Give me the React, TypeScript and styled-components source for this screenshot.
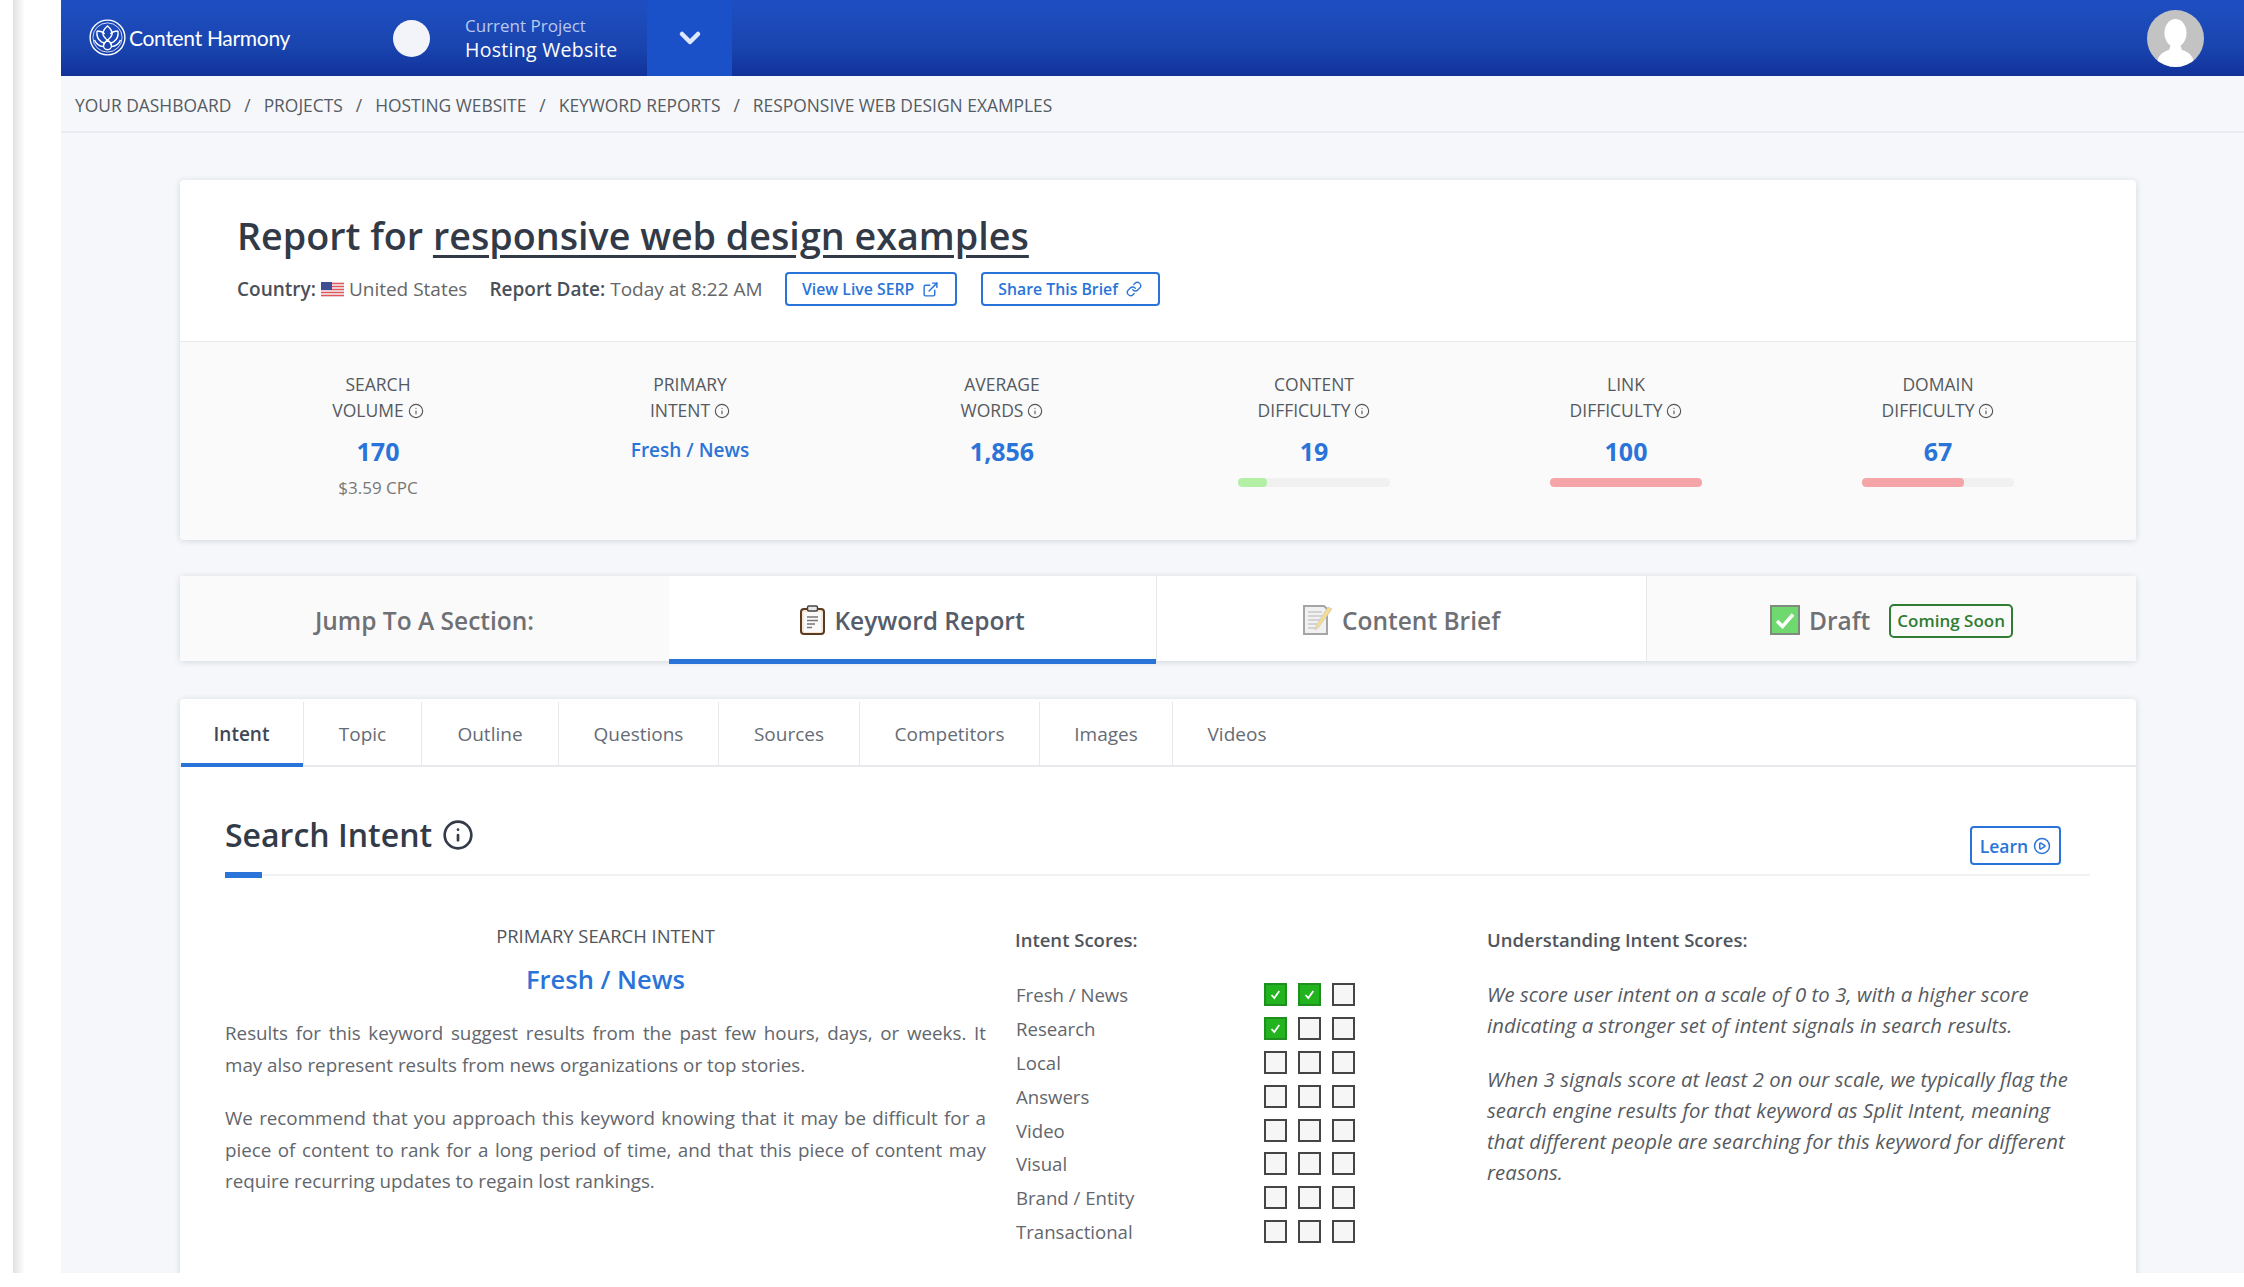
import React from 'react'
import styled, { createGlobalStyle } from 'styled-components'
import { ChevronDown, CirclePlay, ExternalLink, Info, Link } from 'lucide-react'

const GlobalStyle = createGlobalStyle`
  html, body {
    margin: 0;
    padding: 0;
    background: #fff;
  }
  body {
    font-family: 'Open Sans', 'Noto Sans', sans-serif;
    color: #5f6368;
  }
  * {
    box-sizing: border-box;
  }
`

const blue = '#2a74d9'

const Shell = styled.div`
  display: flex;
  width: 2244px;
  height: 1287px;
  overflow: hidden;
  background: #fff;
`
const Rail = styled.div`
  flex: 0 0 61px;
  height: 1273px;
  background: linear-gradient(to right, #fff 13px, #e2e2e2 13px, #fff 25px);
`
const Page = styled.div`
  flex: 1;
  height: 1273px;
  overflow: hidden;
  background: #f5f7fa;
`
const TopBar = styled.header`
  display: flex;
  align-items: center;
  height: 76px;
  padding-left: 28px;
  padding-right: 40px;
  background: linear-gradient(to bottom, #1e4fc2, #1a45b0 60%, #11329a);
  color: #fff;
`
const Brand = styled.div`
  display: flex;
  align-items: center;
  gap: 3px;
  width: 304px;
  padding-bottom: 1px;
  font-family: 'Lato', sans-serif;
  font-size: 21px;
  letter-spacing: -0.3px;
`
const ProjectDot = styled.div`
  width: 37px;
  height: 37px;
  border-radius: 50%;
  background: #f2f4fa;
`
const Project = styled.div`
  width: 182px;
  margin-left: 35px;
`
const ProjectLabel = styled.div`
  font-size: 17px;
  line-height: 24px;
  color: #b9c8ec;
`
const ProjectName = styled.div`
  font-size: 19.5px;
  line-height: 24px;
  letter-spacing: 0.3px;
`
const ProjectToggle = styled.div`
  display: flex;
  align-items: center;
  justify-content: center;
  width: 85px;
  height: 76px;
  background: #1a50c8;
`
const AvatarSlot = styled.div`
  margin-left: auto;
  width: 57px;
  height: 57px;
`
const Crumbs = styled.nav`
  display: flex;
  align-items: center;
  gap: 13px;
  height: 57px;
  padding-left: 14px;
  padding-top: 2px;
  border-bottom: 2px solid #e9ecf0;
  font-size: 17.4px;
  color: #555b63;
  text-transform: uppercase;
`
const Content = styled.main`
  padding: 47px 108px 0 119px;
`
const Card = styled.section`
  background: #fff;
  border-radius: 4px;
  box-shadow: 0 1px 6px rgba(40, 50, 70, 0.16);
`
const Overview = styled.div`
  padding: 31px 57px 35px;
  border-bottom: 1px solid #e8eaee;
`
const Title = styled.h1`
  margin: 0;
  font-size: 37.7px;
  line-height: 50px;
  font-weight: 600;
  color: #323a47;
  u {
    text-underline-offset: 5px;
  }
`
const Meta = styled.div`
  display: flex;
  align-items: center;
  margin-top: 11px;
  height: 34px;
  font-size: 19px;
  color: #666;
  b {
    font-weight: 600;
    color: #4a505a;
  }
`
const MetaItem = styled.span`
  display: flex;
  align-items: center;
  gap: 5px;
  margin-right: 22px;
`
const OutlineButton = styled.a`
  display: flex;
  align-items: center;
  justify-content: center;
  gap: 8px;
  height: 34px;
  width: ${(p) => p.$width}px;
  margin-right: 24px;
  border: 2px solid ${blue};
  border-radius: 4px;
  font-size: 15.8px;
  font-weight: 600;
  color: ${blue};
`
const LearnButton = styled(OutlineButton)`
  height: 39px;
  margin-top: 11px;
  margin-right: 29px;
  font-size: 17.5px;
  gap: 5px;
`
const Stats = styled.div`
  display: grid;
  grid-template-columns: repeat(6, 312px);
  height: 198px;
  padding: 29px 42px 0;
  background: #fafafa;
  border-radius: 0 0 4px 4px;
`
const Stat = styled.div`
  display: flex;
  flex-direction: column;
  align-items: center;
`
const StatLabel = styled.div`
  font-size: 17.5px;
  line-height: 26px;
  text-align: center;
  color: #55595f;
  text-transform: uppercase;
  svg {
    vertical-align: -2px;
    margin-left: 4px;
    color: #555;
  }
`
const StatValue = styled.div`
  margin-top: ${(p) => (p.$small ? 10 : 11)}px;
  line-height: 34px;
  font-size: ${(p) => (p.$small ? 19 : 25)}px;
  font-weight: ${(p) => (p.$small ? 600 : 700)};
  color: ${blue};
`
const StatNote = styled.div`
  margin-top: 10px;
  font-size: 17px;
  line-height: 20px;
  color: #777;
`
const Meter = styled.div`
  width: 152px;
  height: 9px;
  margin-top: 10px;
  border-radius: 4px;
  background: #f1f1f1;
  overflow: hidden;
`
const MeterFill = styled.div`
  height: 100%;
  border-radius: 4px;
  background: ${(p) => (p.$good ? '#b4efa6' : '#f5a5a8')};
`
const Jump = styled(Card)`
  display: grid;
  grid-template-columns: 489px 488px 490px 1fr;
  height: 85px;
  margin-top: 36px;
`
const JumpCell = styled.div`
  position: relative;
  display: flex;
  align-items: center;
  justify-content: center;
  gap: ${(p) => p.$gap || 9}px;
  padding-top: 3px;
  font-size: 24.5px;
  font-weight: 600;
  color: ${(p) => (p.$active ? '#555d6b' : '#6f7074')};
  background: ${(p) => (p.$plain ? '#fafafa' : '#fff')};
  border-right: ${(p) => (p.$divider ? '1px solid #e5e7ea' : 'none')};
  &::after {
    content: ${(p) => (p.$active ? "''" : 'none')};
    position: absolute;
    left: 0;
    right: 0;
    bottom: -3px;
    height: 5px;
    background: ${blue};
  }
`
const SoonTag = styled.span`
  margin-left: 10px;
  margin-top: 1px;
  padding: 3px 6px;
  border: 2px solid #2f7d32;
  border-radius: 5px;
  font-size: 17px;
  line-height: 24px;
  color: #2f7d32;
`
const Panel = styled(Card)`
  margin-top: 38px;
  height: 640px;
`
const Tabs = styled.div`
  display: flex;
  height: 68px;
  padding-top: 3px;
  border-bottom: 2px solid #e6e8ec;
`
const Tab = styled.div`
  position: relative;
  display: flex;
  align-items: center;
  justify-content: center;
  width: ${(p) => p.$width}px;
  font-size: 19px;
  font-weight: ${(p) => (p.$active ? 600 : 400)};
  color: ${(p) => (p.$active ? '#3f4756' : '#666c75')};
  border-right: ${(p) => (p.$last ? 'none' : '1px solid #e6e8ec')};
  &::after {
    content: ${(p) => (p.$active ? "''" : 'none')};
    position: absolute;
    left: 1px;
    right: 0;
    bottom: -2px;
    height: 4px;
    background: ${blue};
  }
`
const PanelBody = styled.div`
  padding: 0 46px 0 45px;
`
const SectionHead = styled.div`
  position: relative;
  display: flex;
  align-items: flex-start;
  justify-content: space-between;
  height: 109px;
  padding-top: 48px;
  border-bottom: 2px solid #f0f1f3;
  &::after {
    content: '';
    position: absolute;
    left: 0;
    bottom: -4px;
    width: 37px;
    height: 6px;
    background: ${blue};
  }
`
const SectionTitle = styled.h2`
  display: flex;
  align-items: center;
  gap: 10px;
  margin: 0;
  font-size: 32px;
  line-height: 40px;
  font-weight: 600;
  color: #333b48;
`
const Columns = styled.div`
  display: flex;
`
const IntentCol = styled.div`
  width: 761px;
  padding-top: 48px;
`
const Kicker = styled.div`
  font-size: 18.4px;
  line-height: 24px;
  text-align: center;
  color: #50555c;
`
const IntentName = styled.div`
  margin-top: 13px;
  margin-bottom: 21px;
  font-size: 25.5px;
  line-height: 36px;
  font-weight: 600;
  text-align: center;
  color: ${blue};
`
const Copy = styled.p`
  margin: 0 0 22px;
  font-size: 18.8px;
  line-height: 31.5px;
  text-align: justify;
  color: #62666c;
`
const ScoreCol = styled.div`
  width: 472px;
  margin-left: 29px;
  padding-top: 52px;
`
const ColHeading = styled.div`
  margin-bottom: 26px;
  font-size: 18.5px;
  line-height: 24px;
  font-weight: 600;
  color: #50555c;
`
const ScoreRow = styled.div`
  display: flex;
  align-items: center;
  height: 33.8px;
  font-size: 18.6px;
  color: #62666c;
`
const ScoreName = styled.div`
  width: 249px;
  padding-left: 1px;
`
const Boxes = styled.div`
  display: flex;
  gap: 11px;
`
const Box = styled.div`
  display: flex;
  align-items: center;
  justify-content: center;
  width: 23px;
  height: 23px;
  border: 2px solid ${(p) => (p.$on ? '#1f8f1f' : '#454545')};
  background: ${(p) => (p.$on ? '#22b31f' : '#f6f6f6')};
`
const NotesCol = styled.div`
  flex: 1;
  padding-top: 52px;
`
const NotesHeading = styled(ColHeading)`
  margin-bottom: 27px;
`
const Note = styled.p`
  margin: 0 0 23px;
  font-size: 20.3px;
  letter-spacing: 0.1px;
  line-height: 31px;
  font-style: italic;
  color: #565a60;
`

const LogoMark = () => (
  <svg width="37" height="37" viewBox="0 0 37 37" fill="none" stroke="#fff" strokeWidth="1.4">
    <circle cx="18.5" cy="18.5" r="17.4" />
    <circle cx="18.5" cy="18.5" r="14.6" strokeWidth="0.8" />
    <path d="M18.5 7c3 2.6 4.6 5 4.6 7.6s-2 4.6-4.6 6.6c-2.6-2-4.6-4-4.6-6.6S15.5 9.600 18.500 7z" />
    <path d="M18.500 21.200c3 2 4 4 4 5.600a4 4 0 0 1-8 0c0-1.600 1-3.600 4-5.600z" />
    <path d="M8 12c3.200 0 6 1 7.600 3M29 12c-3.200 0-6 1-7.600 3" />
    <path d="M8 12c-.6 5 1 8.600 4.400 10.800 1.300.8 2.800 1.200 3.800 1.200M29 12c.6 5-1 8.600-4.400 10.800-1.300.8-2.800 1.200-3.800 1.200" />
    <path d="M5.500 21c1.400 3.600 4.400 6.200 9 6.600M31.500 21c-1.400 3.600-4.400 6.200-9 6.600" />
  </svg>
)

const Avatar = () => (
  <svg width="57" height="57" viewBox="0 0 57 57">
    <clipPath id="avatar-clip">
      <circle cx="28.500" cy="28.500" r="28.500" />
    </clipPath>
    <g clipPath="url(#avatar-clip)">
      <rect width="57" height="57" fill="#c3c3c3" />
      <ellipse cx="28.500" cy="23" rx="11" ry="14" fill="#fff" />
      <path d="M24 34h9l2 6c7 2 12 6 13 17H9c1-11 6-15 13-17z" fill="#fff" />
    </g>
  </svg>
)

const Flag = () => (
  <svg width="23" height="15" viewBox="0 0 23 15">
    <rect width="23" height="15" fill="#f3f4f6" />
    <path d="M0 1.500h23M0 4.500h23M0 7.500h23M0 10.500h23M0 13.500h23" stroke="#e0565b" strokeWidth="1.500" />
    <rect width="11" height="8" fill="#3f4f93" />
  </svg>
)

const ClipboardEmoji = () => (
  <svg width="25" height="30" viewBox="0 0 25 30">
    <rect x="1" y="4" width="23" height="25" rx="3" fill="#f5e6d6" stroke="#5b3a22" strokeWidth="2" />
    <rect x="4" y="7" width="17" height="20" fill="#fafafa" />
    <rect x="7.500" y="1" width="10" height="5" rx="1.500" fill="#e9e9e9" stroke="#444" strokeWidth="1.500" />
    <path d="M7 12h11M7 15.500h11M7 19h8M7 22.500h5" stroke="#777" strokeWidth="1.500" />
  </svg>
)

const MemoEmoji = () => (
  <svg width="30" height="30" viewBox="0 0 30 30">
    <path d="M1 1h20l3 3v25H1z" fill="#f1f1f1" stroke="#a5a5a5" strokeWidth="2" />
    <path d="M5 7h14M5 11h14M5 15h12M5 19h9M5 23h7" stroke="#c9c9c9" strokeWidth="1.500" />
    <path d="M29 4 L15 23 l-3 2 1-4 L25 2z" fill="#f7dc8b" stroke="#c9c9c9" strokeWidth="0.800" />
  </svg>
)

const CheckEmoji = () => (
  <svg width="30" height="30" viewBox="0 0 30 30">
    <rect x="1" y="1" width="28" height="28" fill="#6fd96f" stroke="#7d8a7d" strokeWidth="2" />
    <path d="M7 16l5.500 5.500L23 9.500" fill="none" stroke="#fff" strokeWidth="3.500" />
  </svg>
)

const BoxCheck = () => (
  <svg width="15" height="15" viewBox="0 0 15 15">
    <path d="M3.500 8l2.800 3 5-7" fill="none" stroke="#fff" strokeWidth="1.800" />
  </svg>
)

const StatInfo = () => <Info size={16} strokeWidth={1.700} />

const crumbs = ['Your Dashboard', 'Projects', 'Hosting Website', 'Keyword Reports', 'Responsive Web Design Examples']

type StatData = {
  top: string
  bottom: string
  value: string
  small?: boolean
  note?: string
  meter?: number
  good?: boolean
}

const stats: StatData[] = [
  { top: 'Search', bottom: 'Volume', value: '170', note: '$3.59 CPC' },
  { top: 'Primary', bottom: 'Intent', value: 'Fresh / News', small: true },
  { top: 'Average', bottom: 'Words', value: '1,856' },
  { top: 'Content', bottom: 'Difficulty', value: '19', meter: 19, good: true },
  { top: 'Link', bottom: 'Difficulty', value: '100', meter: 100 },
  { top: 'Domain', bottom: 'Difficulty', value: '67', meter: 67 },
]

const tabs = [
  { name: 'Intent', width: 124 },
  { name: 'Topic', width: 118 },
  { name: 'Outline', width: 137 },
  { name: 'Questions', width: 160 },
  { name: 'Sources', width: 141 },
  { name: 'Competitors', width: 180 },
  { name: 'Images', width: 133 },
  { name: 'Videos', width: 128 },
]

const scores = [
  { name: 'Fresh / News', score: 2 },
  { name: 'Research', score: 1 },
  { name: 'Local', score: 0 },
  { name: 'Answers', score: 0 },
  { name: 'Video', score: 0 },
  { name: 'Visual', score: 0 },
  { name: 'Brand / Entity', score: 0 },
  { name: 'Transactional', score: 0 },
]

const App: React.FC = () => (
  <Shell>
    <GlobalStyle />
    <Rail />
    <Page>
      <TopBar>
        <Brand>
          <LogoMark />
          Content Harmony
        </Brand>
        <ProjectDot />
        <Project>
          <ProjectLabel>Current Project</ProjectLabel>
          <ProjectName>Hosting Website</ProjectName>
        </Project>
        <ProjectToggle>
          <ChevronDown size={32} strokeWidth={3.400} color="#dfe7fa" />
        </ProjectToggle>
        <AvatarSlot>
          <Avatar />
        </AvatarSlot>
      </TopBar>
      <Crumbs>
        {crumbs.map((crumb, i) => (
          <React.Fragment key={crumb}>
            {i > 0 && <span>/</span>}
            <span>{crumb}</span>
          </React.Fragment>
        ))}
      </Crumbs>
      <Content>
        <Card>
          <Overview>
            <Title>
              Report for <u>responsive web design examples</u>
            </Title>
            <Meta>
              <MetaItem>
                <b>Country:</b>
                <Flag />
                United States
              </MetaItem>
              <MetaItem>
                <b>Report Date:</b> Today at 8:22 AM
              </MetaItem>
              <OutlineButton $width={172}>
                View Live SERP <ExternalLink size={17} />
              </OutlineButton>
              <OutlineButton $width={179}>
                Share This Brief <Link size={16} />
              </OutlineButton>
            </Meta>
          </Overview>
          <Stats>
            {stats.map((stat) => (
              <Stat key={stat.top}>
                <StatLabel>
                  {stat.top}
                  <br />
                  {stat.bottom}
                  <StatInfo />
                </StatLabel>
                <StatValue $small={stat.small}>{stat.value}</StatValue>
                {stat.note && <StatNote>{stat.note}</StatNote>}
                {stat.meter !== undefined && (
                  <Meter>
                    <MeterFill $good={stat.good} style={{ width: `${stat.meter}%` }} />
                  </Meter>
                )}
              </Stat>
            ))}
          </Stats>
        </Card>
        <Jump>
          <JumpCell $plain>Jump To A Section:</JumpCell>
          <JumpCell $active $divider>
            <ClipboardEmoji />
            Keyword Report
          </JumpCell>
          <JumpCell $divider>
            <MemoEmoji />
            Content Brief
          </JumpCell>
          <JumpCell $plain>
            <CheckEmoji />
            Draft
            <SoonTag>Coming Soon</SoonTag>
          </JumpCell>
        </Jump>
        <Panel>
          <Tabs>
            {tabs.map((tab, i) => (
              <Tab key={tab.name} $width={tab.width} $active={i === 0} $last={i === tabs.length - 1}>
                {tab.name}
              </Tab>
            ))}
          </Tabs>
          <PanelBody>
            <SectionHead>
              <SectionTitle>
                Search Intent <Info size={32} strokeWidth={2} />
              </SectionTitle>
              <LearnButton $width={91}>
                Learn <CirclePlay size={18} />
              </LearnButton>
            </SectionHead>
            <Columns>
              <IntentCol>
                <Kicker>PRIMARY SEARCH INTENT</Kicker>
                <IntentName>Fresh / News</IntentName>
                <Copy>
                  Results for this keyword suggest results from the past few hours, days, or weeks. It may also
                  represent results from news organizations or top stories.
                </Copy>
                <Copy>
                  We recommend that you approach this keyword knowing that it may be difficult for a piece of content
                  to rank for a long period of time, and that this piece of content may require recurring updates to
                  regain lost rankings.
                </Copy>
              </IntentCol>
              <ScoreCol>
                <ColHeading>Intent Scores:</ColHeading>
                {scores.map((row) => (
                  <ScoreRow key={row.name}>
                    <ScoreName>{row.name}</ScoreName>
                    <Boxes>
                      {[0, 1, 2].map((n) => (
                        <Box key={n} $on={n < row.score}>
                          {n < row.score && <BoxCheck />}
                        </Box>
                      ))}
                    </Boxes>
                  </ScoreRow>
                ))}
              </ScoreCol>
              <NotesCol>
                <NotesHeading>Understanding Intent Scores:</NotesHeading>
                <Note>
                  We score user intent on a scale of 0 to 3, with a higher score indicating a stronger set of intent
                  signals in search results.
                </Note>
                <Note>
                  When 3 signals score at least 2 on our scale, we typically flag the search engine results for that
                  keyword as Split Intent, meaning that different people are searching for this keyword for different
                  reasons.
                </Note>
              </NotesCol>
            </Columns>
          </PanelBody>
        </Panel>
      </Content>
    </Page>
  </Shell>
)

export default App
